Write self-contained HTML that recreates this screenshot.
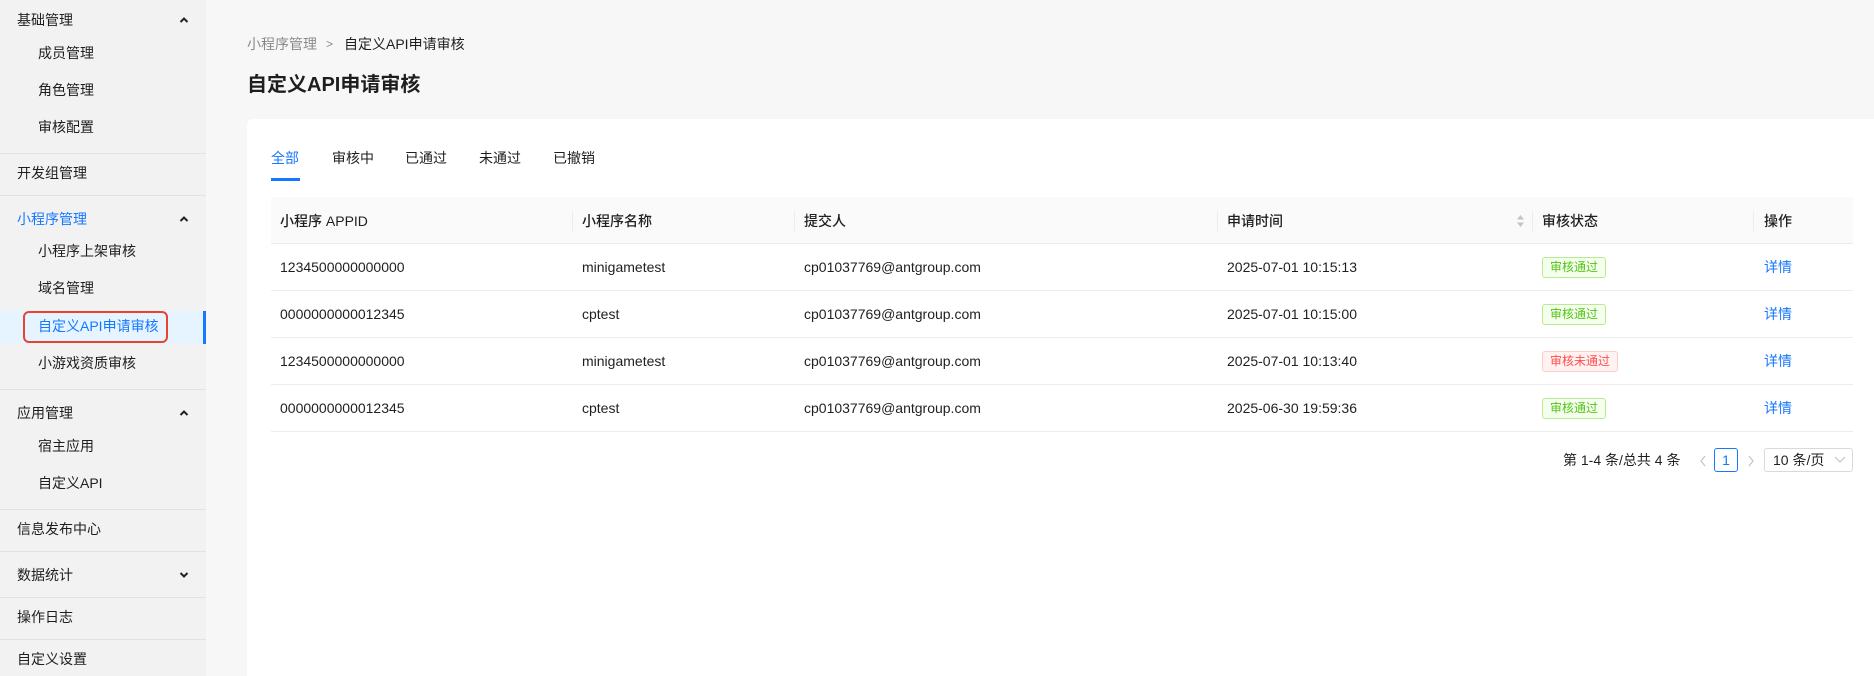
<!DOCTYPE html>
<html><head><meta charset="utf-8"><style>
*{box-sizing:border-box;margin:0;padding:0}
body{width:1874px;height:676px;overflow:hidden;background:#f7f7f7;font-family:"Liberation Sans","Noto Sans CJK SC",sans-serif;font-size:14px;color:rgba(0,0,0,.88);position:relative}
.a{position:absolute;white-space:nowrap}
#side{position:absolute;left:0;top:0;width:206px;height:676px;background:#f2f2f2}
.hr{position:absolute;left:0;width:206px;height:1px;background:#e2e2e2}
.t{position:absolute;left:17px;line-height:20px}
.s{position:absolute;left:38px;line-height:20px}
.chev{position:absolute;left:179px;width:10px;height:10px}
#card{position:absolute;left:247px;top:119px;width:1627px;height:557px;background:#fff;border-radius:6px 0 0 0}
.vsep{position:absolute;top:211px;width:1px;height:20px;background:#ececec}
.row{position:absolute;left:271px;width:1582px;height:1px;background:#ececec}
.tag{position:absolute;height:21px;line-height:19px;font-size:12px;padding:0 7px;border-radius:3px;border:1px solid #b7eb8f;background:#f6ffed;color:#52c41a}
.tag.r{border-color:#ffccc7;background:#fff2f0;color:#ff4d4f}
.lk{color:#1677ff}
.h{font-weight:500}
</style></head><body>
<div id="side">
<div class="t" style="top:10px">基础管理</div>
<svg class="chev" style="top:15px" viewBox="0 0 10 10"><path d="M1.5 7L5 3.5L8.5 7" stroke="#222" stroke-width="2" fill="none"/></svg>
<div class="s" style="top:43px">成员管理</div>
<div class="s" style="top:80px">角色管理</div>
<div class="s" style="top:117px">审核配置</div>
<div class="hr" style="top:153px"></div>
<div class="t" style="top:163px">开发组管理</div>
<div class="hr" style="top:195px"></div>
<div class="t" style="top:209px;color:#1677ff">小程序管理</div>
<svg class="chev" style="top:214px" viewBox="0 0 10 10"><path d="M1.5 7L5 3.5L8.5 7" stroke="#222" stroke-width="2" fill="none"/></svg>
<div class="s" style="top:241px">小程序上架审核</div>
<div class="s" style="top:278px">域名管理</div>
<div style="position:absolute;left:0;top:311px;width:206px;height:33px;background:#e6f4ff;border-right:3px solid #1677ff"></div>
<div style="position:absolute;left:23px;top:311px;width:145px;height:32px;border:2.5px solid #e8432e;border-radius:6px"></div>
<div class="s" style="top:316px;color:#1677ff">自定义API申请审核</div>
<div class="s" style="top:353px">小游戏资质审核</div>
<div class="hr" style="top:389px"></div>
<div class="t" style="top:403px">应用管理</div>
<svg class="chev" style="top:408px" viewBox="0 0 10 10"><path d="M1.5 7L5 3.5L8.5 7" stroke="#222" stroke-width="2" fill="none"/></svg>
<div class="s" style="top:436px">宿主应用</div>
<div class="s" style="top:473px">自定义API</div>
<div class="hr" style="top:509px"></div>
<div class="t" style="top:519px">信息发布中心</div>
<div class="hr" style="top:551px"></div>
<div class="t" style="top:565px">数据统计</div>
<svg class="chev" style="top:570px" viewBox="0 0 10 10"><path d="M1.5 3L5 6.5L8.5 3" stroke="#222" stroke-width="2" fill="none"/></svg>
<div class="hr" style="top:597px"></div>
<div class="t" style="top:607px">操作日志</div>
<div class="hr" style="top:639px"></div>
<div class="t" style="top:649px">自定义设置</div>
</div>

<div class="a" style="left:247px;top:34px;line-height:20px;color:rgba(0,0,0,.45)">小程序管理</div>
<div class="a" style="left:326px;top:34px;line-height:20px;color:rgba(0,0,0,.45);font-size:12px">&gt;</div>
<div class="a" style="left:344px;top:34px;line-height:20px">自定义API申请审核</div>
<div class="a" style="left:247px;top:71px;line-height:28px;font-size:20px;font-weight:bold">自定义API申请审核</div>

<div id="card"></div>
<div class="a" style="left:271px;top:148px;line-height:20px;color:#1677ff">全部</div>
<div class="a" style="left:332px;top:148px;line-height:20px">审核中</div>
<div class="a" style="left:405px;top:148px;line-height:20px">已通过</div>
<div class="a" style="left:479px;top:148px;line-height:20px">未通过</div>
<div class="a" style="left:553px;top:148px;line-height:20px">已撤销</div>
<div class="a" style="left:271px;top:178px;width:29px;height:3px;background:#1677ff"></div>

<div class="a" style="left:271px;top:197px;width:1582px;height:47px;background:#fafafa;border-bottom:1px solid #ececec"></div>
<div class="vsep" style="left:572px"></div><div class="vsep" style="left:794px"></div><div class="vsep" style="left:1217px"></div><div class="vsep" style="left:1532px"></div><div class="vsep" style="left:1753px"></div>
<div class="a h" style="left:280px;top:211px;line-height:20px">小程序 APPID</div>
<div class="a h" style="left:582px;top:211px;line-height:20px">小程序名称</div>
<div class="a h" style="left:804px;top:211px;line-height:20px">提交人</div>
<div class="a h" style="left:1227px;top:211px;line-height:20px">申请时间</div>
<svg class="a" style="left:1516px;top:213px" width="9" height="16" viewBox="0 0 9 16"><path d="M1 6.5L4.5 2L8 6.5Z M1 9.5L4.5 14L8 9.5Z" fill="#c4c4c4"/></svg>
<div class="a h" style="left:1542px;top:211px;line-height:20px">审核状态</div>
<div class="a h" style="left:1764px;top:211px;line-height:20px">操作</div>

<div class="row" style="top:290px"></div><div class="row" style="top:337px"></div><div class="row" style="top:384px"></div><div class="row" style="top:431px"></div>

<div class="a" style="left:280px;top:257px;line-height:20px">1234500000000000</div>
<div class="a" style="left:582px;top:257px;line-height:20px">minigametest</div>
<div class="a" style="left:804px;top:257px;line-height:20px">cp01037769@antgroup.com</div>
<div class="a" style="left:1227px;top:257px;line-height:20px">2025-07-01 10:15:13</div>
<div class="tag" style="left:1542px;top:257px">审核通过</div>
<div class="a lk" style="left:1764px;top:257px;line-height:20px">详情</div>

<div class="a" style="left:280px;top:304px;line-height:20px">0000000000012345</div>
<div class="a" style="left:582px;top:304px;line-height:20px">cptest</div>
<div class="a" style="left:804px;top:304px;line-height:20px">cp01037769@antgroup.com</div>
<div class="a" style="left:1227px;top:304px;line-height:20px">2025-07-01 10:15:00</div>
<div class="tag" style="left:1542px;top:304px">审核通过</div>
<div class="a lk" style="left:1764px;top:304px;line-height:20px">详情</div>

<div class="a" style="left:280px;top:351px;line-height:20px">1234500000000000</div>
<div class="a" style="left:582px;top:351px;line-height:20px">minigametest</div>
<div class="a" style="left:804px;top:351px;line-height:20px">cp01037769@antgroup.com</div>
<div class="a" style="left:1227px;top:351px;line-height:20px">2025-07-01 10:13:40</div>
<div class="tag r" style="left:1542px;top:351px">审核未通过</div>
<div class="a lk" style="left:1764px;top:351px;line-height:20px">详情</div>

<div class="a" style="left:280px;top:398px;line-height:20px">0000000000012345</div>
<div class="a" style="left:582px;top:398px;line-height:20px">cptest</div>
<div class="a" style="left:804px;top:398px;line-height:20px">cp01037769@antgroup.com</div>
<div class="a" style="left:1227px;top:398px;line-height:20px">2025-06-30 19:59:36</div>
<div class="tag" style="left:1542px;top:398px">审核通过</div>
<div class="a lk" style="left:1764px;top:398px;line-height:20px">详情</div>

<div class="a" style="left:1563px;top:450px;line-height:20px">第 1-4 条/总共 4 条</div>
<svg class="a" style="left:1699px;top:455px" width="8" height="12" viewBox="0 0 8 12"><path d="M6 1L2 6L6 11" stroke="#c4c4c4" stroke-width="1.2" fill="none"/></svg>
<div class="a" style="left:1714px;top:448px;width:24px;height:24px;border:1px solid #1677ff;border-radius:3px;color:#1677ff;text-align:center;line-height:22px">1</div>
<svg class="a" style="left:1747px;top:455px" width="8" height="12" viewBox="0 0 8 12"><path d="M2 1L6 6L2 11" stroke="#c4c4c4" stroke-width="1.2" fill="none"/></svg>
<div class="a" style="left:1764px;top:448px;width:89px;height:24px;border:1px solid #d9d9d9;border-radius:3px;line-height:22px;padding-left:8px">10 条/页</div>
<svg class="a" style="left:1834px;top:456px" width="12" height="8" viewBox="0 0 12 8"><path d="M1 1L6 6L11 1" stroke="#c4c4c4" stroke-width="1.2" fill="none"/></svg>
</body></html>
